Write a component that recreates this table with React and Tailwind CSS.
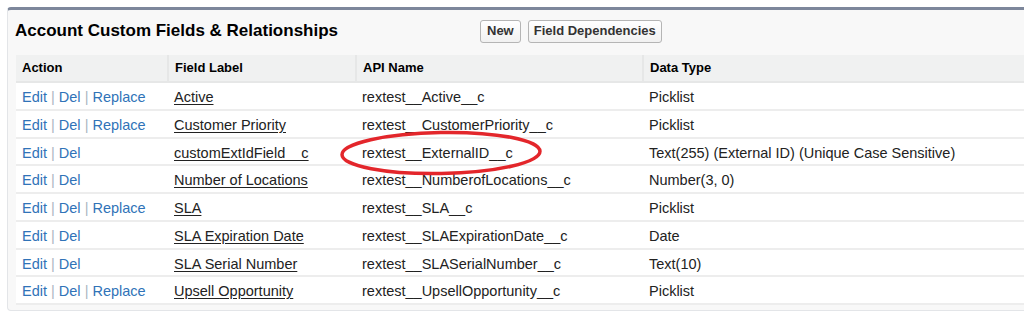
import React from "react";

const rows = [
    { label: "Active", api: "rextest__Active__c", type: "Picklist", replace: true },
    { label: "Customer Priority", api: "rextest__CustomerPriority__c", type: "Picklist", replace: true },
    { label: "customExtIdField__c", api: "rextest__ExternalID__c", type: "Text(255) (External ID) (Unique Case Sensitive)", replace: false },
    { label: "Number of Locations", api: "rextest__NumberofLocations__c", type: "Number(3, 0)", replace: false },
    { label: "SLA", api: "rextest__SLA__c", type: "Picklist", replace: true },
    { label: "SLA Expiration Date", api: "rextest__SLAExpirationDate__c", type: "Date", replace: false },
    { label: "SLA Serial Number", api: "rextest__SLASerialNumber__c", type: "Text(10)", replace: false },
    { label: "Upsell Opportunity", api: "rextest__UpsellOpportunity__c", type: "Picklist", replace: true },
];

export default function App() {
    return (
        <div className="w-[1024px] h-[325px] bg-white pt-[7px] pl-[7px] overflow-hidden" style={{ fontFamily: '"Liberation Sans", Arial, sans-serif' }}>
            <div className="relative w-[1030px] h-[304px] bg-[#f8f8f8] border-t-[3px] border-t-[#7d879b] border-l border-l-[#e3e5e8] border-b border-b-[#e3e5e8] rounded-tl-[4px] rounded-bl-[4px] pl-[8px]">
                <div className="flex items-center h-[41px]">
                    <h2 className="text-[17px] font-bold text-black w-[465px] -ml-[1px]">Account Custom Fields &amp; Relationships</h2>
                    <div className="flex gap-[7px] mt-[1px]">
                        <button className="h-[23px] px-[6px] text-[13px] font-bold text-[#333] bg-gradient-to-b from-white to-[#f1f1f1] border border-[#b5b5b5] rounded-[3px]">New</button>
                        <button className="h-[23px] px-[5px] text-[13px] font-bold text-[#333] bg-gradient-to-b from-white to-[#f1f1f1] border border-[#b5b5b5] rounded-[3px]">Field Dependencies</button>
                    </div>
                </div>
                <table className="mt-[4px] w-[1020px] border-collapse bg-white text-[14.5px] text-[#222] table-fixed">
                    <colgroup>
                        <col className="w-[152px]" />
                        <col className="w-[188px]" />
                        <col className="w-[287px]" />
                        <col />
                    </colgroup>
                    <thead>
                        <tr className="h-[27px] bg-[#f0f1f1] text-[13px] font-bold text-black text-left">
                            <th className="pl-[6px] border-b-2 border-[#e6e7e7]">Action</th>
                            <th className="pl-[6px] border-b-2 border-l-2 border-[#e6e7e7]">Field Label</th>
                            <th className="pl-[6px] border-b-2 border-l-2 border-[#e6e7e7]">API Name</th>
                            <th className="pl-[6px] border-b-2 border-l-2 border-[#e6e7e7]">Data Type</th>
                        </tr>
                    </thead>
                    <tbody>
                        {rows.map((r) => (
                            <tr key={r.api} className="h-[27.5px] border-b-2 border-[#ededed]">
                                <td className="pl-[6px] pt-[4px] text-[#3073b8]">
                                    Edit <span className="text-[#aab5c2]">|</span> Del
                                    {r.replace && (
                                        <>
                                            {" "}
                                            <span className="text-[#aab5c2]">|</span> Replace
                                        </>
                                    )}
                                </td>
                                <td className="pl-[6px] pt-[4px]">
                                    <span className="underline underline-offset-2 text-[#222]">{r.label}</span>
                                </td>
                                <td className="pl-[6px] pt-[4px]">{r.api}</td>
                                <td className="pl-[6px] pt-[4px]">{r.type}</td>
                            </tr>
                        ))}
                    </tbody>
                </table>
                <svg className="absolute left-[331px] top-[119px]" width="206" height="48" viewBox="0 0 206 48">
                    <ellipse cx="102" cy="24" rx="99" ry="20.5" fill="none" stroke="#e3262b" strokeWidth="3.5" transform="rotate(-1 102 24)" />
                </svg>
            </div>
        </div>
    );
}
